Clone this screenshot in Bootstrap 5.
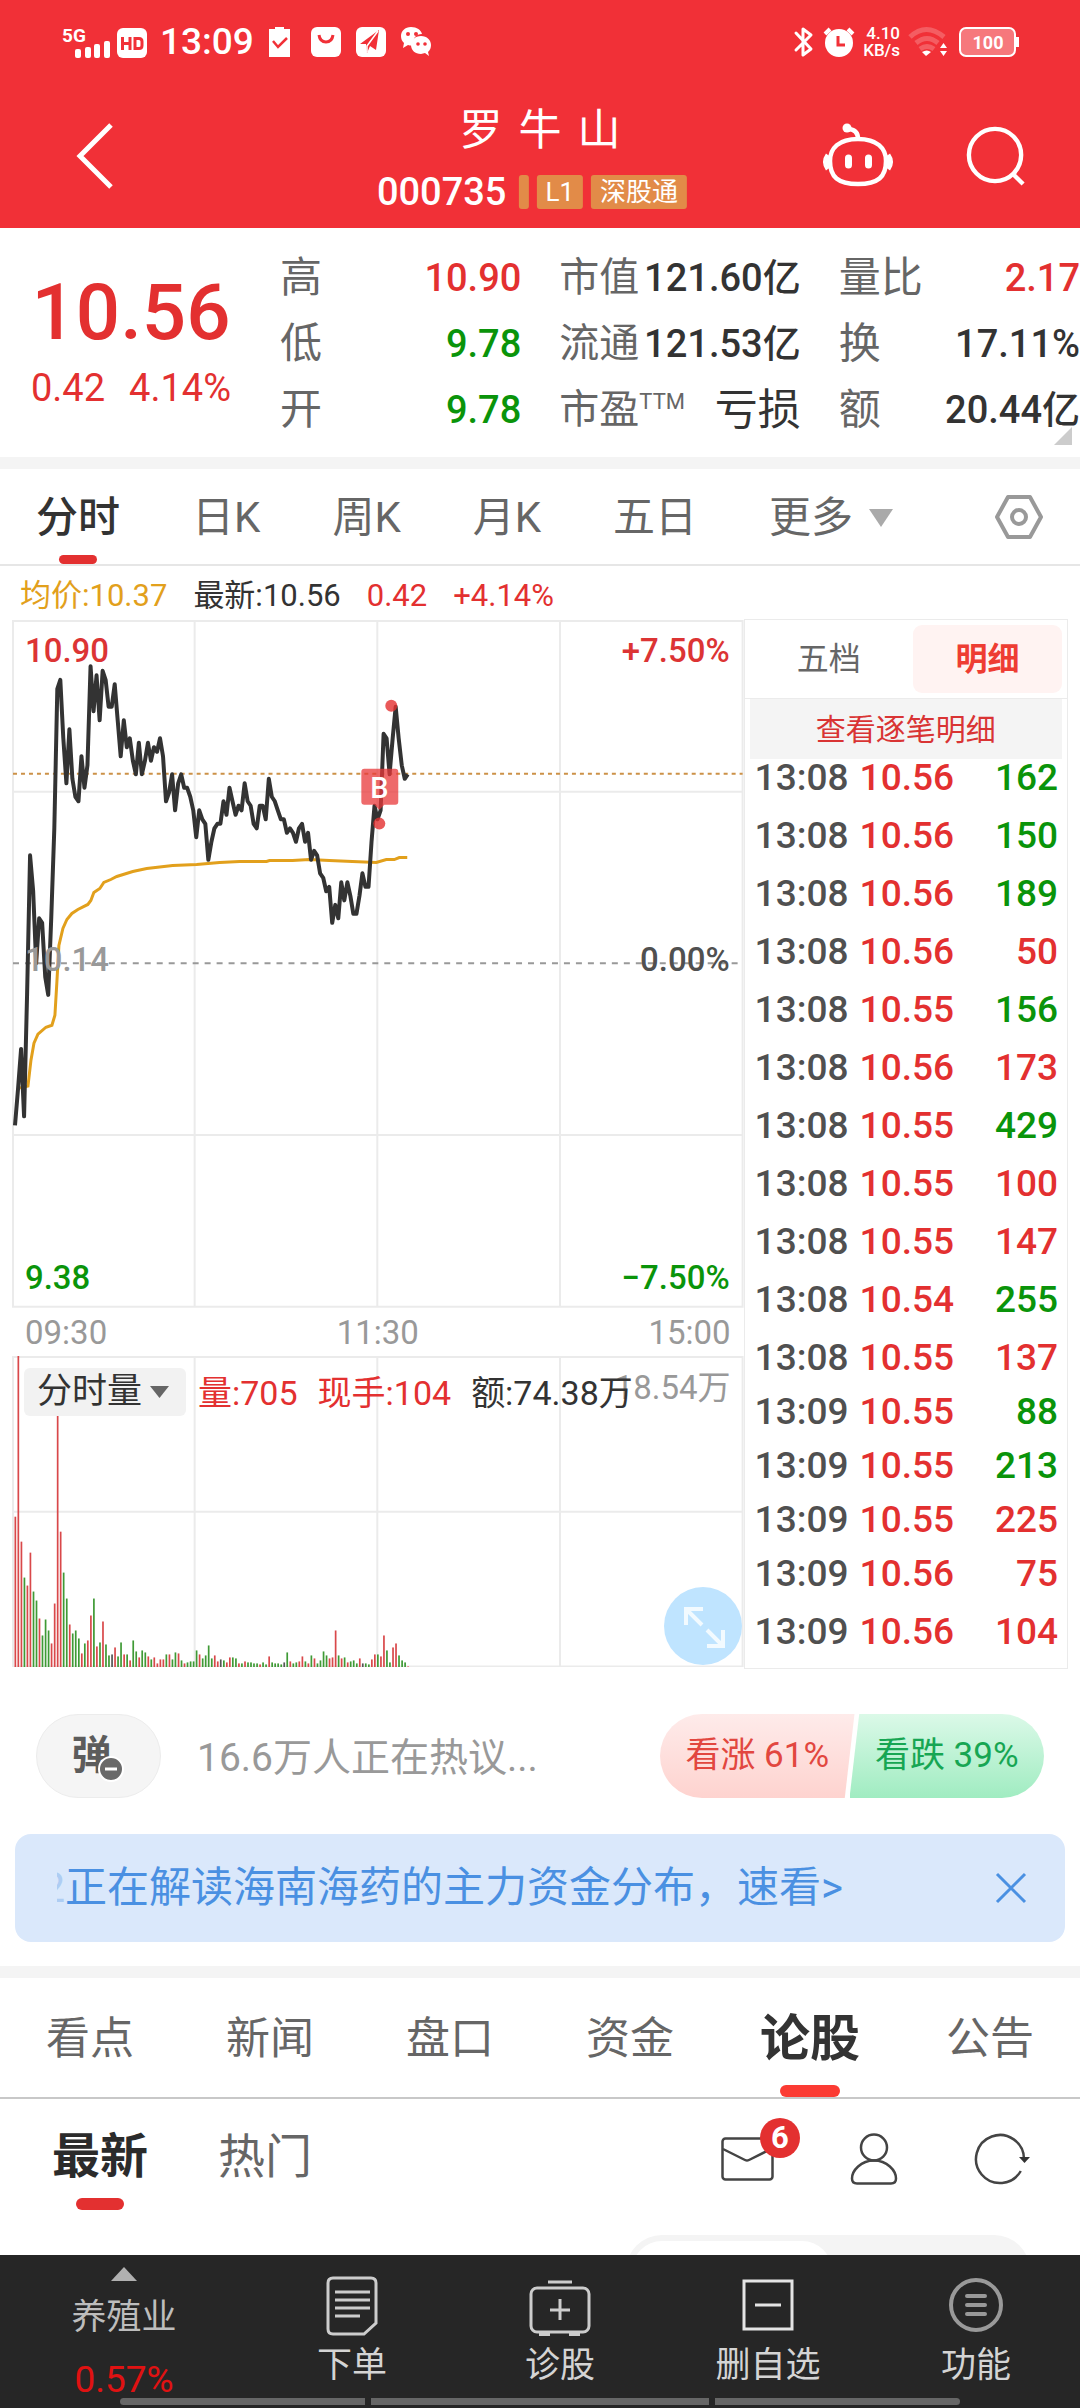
<!DOCTYPE html>
<html lang="zh-CN">
<head>
<meta charset="utf-8">
<meta name="viewport" content="width=device-width, initial-scale=1">
<title>罗牛山 000735</title>
<link rel="stylesheet" href="https://cdn.jsdelivr.net/npm/bootstrap@5.3.0/dist/css/bootstrap.min.css">
<style>
:root{--up:#e33030;--down:#0a940a;--ink:#333;--dim:#666;--faint:#999;--line:#ebebeb}
body{font-family:Roboto,"Noto Sans CJK SC",sans-serif;color:var(--ink);background:#fff}
a{text-decoration:none;color:inherit}
button{border:0;background:none;padding:0;color:inherit}
svg{display:block;flex:none}
.up{color:var(--up)}
.down{color:var(--down)}
.app-head{background:#f13037;color:#fff;height:228px}
.status-bar{height:84px;padding:0 60px 0 62px}
.clock{font-size:37px;line-height:40px;font-weight:500;margin:0 14px 0 12px}
.net-speed{font-size:17px;line-height:17px;font-weight:500;text-align:right;margin:0 8px 0 8px}
.title-bar{height:144px;padding:0 54px 0 76px}
.stock-name{font-size:43px;line-height:60px;gap:16px}
.code-row{padding:10px 16px 0 0}
.stock-code{font-size:38px;line-height:44px;font-weight:500}
.flag{background:#e28b48;font-size:26px;line-height:34px;height:34px;border-radius:3px;padding:0 9px}
.flag-cut{width:10px;padding:0}
.quote{height:229px}
.price-box{width:262px;padding-top:40px}
.price-now{font-size:78px;line-height:90px;font-weight:500}
.price-chg{font-size:38px;line-height:60px;gap:24px}
.facts{gap:38px;padding:17px 0 0 18px}
.facts dl{flex:1 1 0;margin:0;white-space:nowrap}
.facts dt{font-size:42px;line-height:66px;font-weight:400;color:var(--dim)}
.facts dd{font-size:38px;line-height:66px;font-weight:500;margin:0}
.facts .cjk{font-size:43px;font-weight:400}
.facts .wide dt{font-size:40px}
.facts sup{font-size:22px;top:-14px}
.facts-more{position:absolute;right:8px;bottom:12px}
.band{height:12px;background:#f4f4f4;flex:none}
.period{height:97px;padding:0 36px;gap:72px;border-bottom:2px solid #e6e6e6;font-size:42px;color:var(--dim)}
.period a,.sections a,.feed-tab{position:relative;white-space:nowrap}
.period a{line-height:93px;padding-top:2px}
.on{color:var(--ink);font-weight:500}
.on::after{content:"";position:absolute;left:50%;bottom:0;width:38px;height:9px;margin-left:-19px;border-radius:5px;background:var(--up)}
.legend-row{height:53px;padding:0 20px;gap:26px;font-size:31px;line-height:60px}
.desk{padding:0 12px}
.plots{flex:733 1 0;min-width:0;position:relative}
.plots svg.plot{width:100%;height:auto}
.plot text{font-size:33px;font-weight:500}
.axis{height:48px;padding:0 13px;font-size:33px;line-height:50px;color:var(--faint)}
.vol-head{position:absolute;left:12px;top:12px;font-size:34px;line-height:50px;gap:20px;white-space:nowrap}
.vol-pick{background:#f2f2f2;border-radius:6px;width:162px;height:48px;padding-left:13px;font-size:35px;line-height:46px;margin-right:-8px;color:#333}
.vol-max{position:absolute;right:13px;top:8px;font-size:33px;line-height:48px;color:var(--faint)}
.zoomer{position:absolute;right:2px;bottom:2px}
.tape{flex:323 1 0;min-width:0;border:1px solid var(--line);height:1050px}
.tape-tabs{height:79px;border-bottom:1px solid var(--line);padding:0 5px 0 0;font-size:32px}
.tape-tabs button{flex:1 1 0;height:68px;border-radius:9px;color:var(--dim)}
.tape-tabs button.picked{flex:0 0 149px;background:#fff3f2;color:#ee3d33;font-weight:700}
.tape-all{margin:0 5px;height:60px;line-height:62px;font-size:30px;background:#f4f4f4;color:#d93434;text-align:center}
.deals{width:100%;color:#505050;font-size:37px;font-weight:500;line-height:38px}
.deals td{padding:0 0 20px}
.deals tr.tight td{padding-bottom:16px}
.deals td:first-child{padding-left:10px;width:115px}
.deals td:last-child{text-align:right;padding-right:9px}
.talk{height:84px;margin:45px 36px 36px}
.danmu{width:125px;height:84px;border-radius:42px;background:#f5f5f5;border:1px solid #ececec;font-size:40px;font-weight:700;color:#5c5c5c;position:relative;line-height:72px}
.danmu span{display:block;padding-right:14px}
.danmu svg{position:absolute;left:61px;top:41px}
.talk input{border:0;outline:0;background:none;font-size:39px;flex:1 1 0;min-width:0;margin:4px 20px 0 36px;padding:0;color:var(--dim)}
.talk input::placeholder{color:var(--faint);opacity:1}
.vote{width:384px;height:84px;font-size:35px;line-height:80px;border-radius:42px;overflow:hidden}
.vote button{flex:1 1 0}
.vote .bull{background:linear-gradient(#feebea,#fed3cf);color:#e2473f;clip-path:polygon(0 0,100% 0,95% 100%,0 100%)}
.vote .bear{background:linear-gradient(#dbf9e8,#a0ecc1);color:#17a653;clip-path:polygon(5% 0,100% 0,100% 100%,0 100%);margin-left:-5px}
.promo{margin:0 15px 24px;height:108px;border-radius:16px;background:#dae8fb;color:#4a90e2;font-size:42px;line-height:110px;padding:0 38px 0 42px}
.ghost{display:inline-block;width:8px;overflow:hidden;direction:rtl;vertical-align:top;opacity:.3}
.sections{height:121px;border-bottom:2px solid #c8c8c8;font-size:44px;color:var(--dim)}
.sections a{flex:1 1 0;text-align:center;line-height:115px;padding-top:4px}
.sections a.on{font-size:50px;font-weight:700}
.sections a.on::after{width:60px;height:12px;margin-left:-30px;border-radius:6px;background:#fb3b33}
.feed{padding:0 50px 0 52px}
.feed-head{height:111px}
.feed-tab{font-size:47px;color:var(--dim);line-height:107px;padding-top:4px;margin-right:70px}
.feed-tab.on{font-size:48px;font-weight:700;color:#2b2b2b}
.feed-tab.on::after{width:48px;height:12px;margin-left:-24px;border-radius:6px}
.feed-tools{gap:76px}
.mail{position:relative}
.mail .dot{position:absolute;left:39px;top:-19px;width:40px;height:40px;border-radius:50%;background:var(--up);color:#fff;font-size:31px;line-height:40px;font-weight:700;text-align:center}
.sort-pill{width:404px;height:72px;border-radius:36px;background:#f4f4f4;padding:6px;margin:25px 0 0 auto}
.sort-pill span{display:block;width:200px;height:60px;border-radius:30px;background:#fff}
.tool-bar{height:153px;background:#262626;color:#d4d4d4;font-size:35px;position:relative;flex:none}
.tool-bar a{flex:208 1 0;padding-top:20px;line-height:50px}
.tool-bar .sector{flex:248 1 0;padding-top:12px}
.sector .name{line-height:74px;margin-bottom:-4px;color:#bdbdbd}
.sector .rate{line-height:58px;color:#e01212;font-size:37px}
.tool-bar .gesture{position:absolute;left:0;right:0;bottom:3px;padding:0 120px;gap:6px}
.gesture i{height:7px;background:#666;flex:245 1 0}
.gesture i:nth-child(2){flex-grow:338}
.gesture i:first-child{border-radius:4px 0 0 4px}
.gesture i:last-child{border-radius:0 4px 4px 0}
</style>
<script src="https://cdn.jsdelivr.net/npm/bootstrap@5.3.0/dist/js/bootstrap.bundle.min.js"></script>
</head>
<body class="d-flex flex-column vh-100 overflow-hidden">
<header class="app-head flex-shrink-0">
  <div class="status-bar d-flex align-items-center justify-content-between">
    <div class="d-flex align-items-center">
      <svg width="86" height="34" viewBox="0 0 86 34" fill="#fff"><text x="0" y="17" font-size="19" font-weight="700">5G</text><rect x="13" y="24" width="6" height="9" rx="2"/><rect x="23" y="22" width="6" height="11" rx="2"/><rect x="32" y="19" width="6" height="14" rx="2"/><rect x="42" y="16" width="6" height="17" rx="2"/><rect x="55" y="3" width="30" height="30" rx="6"/><path d="M60.500 12v13M68 12v13M60.500 18.500h7.500M73 13.500h4q3 0 3 3v4q0 3-3 3h-4z" fill="none" stroke="#f13037" stroke-width="3"/></svg>
      <span class="clock">13:09</span>
      <svg width="164" height="32" viewBox="0 0 164 32" fill="#fff"><path d="M1 3h6V1h9v2h6v28H1z"/><path d="M5 15l5 6 9-9" fill="none" stroke="#f13037" stroke-width="2.500"/><rect x="43" y="1" width="30" height="30" rx="6"/><path d="M51 9q1 7 7 7t7-7" fill="none" stroke="#f13037" stroke-width="3"/><rect x="88" y="1" width="30" height="30" rx="6"/><path d="M92 18L111 4l-3 20-6-4-3 7-1-9z" fill="#f13037"/><path d="M110 5L99 20v6" fill="none" stroke="#fff" stroke-width="1.500"/><path d="M143 1c-6 0-10 4-10 9 0 3 1 5 3 7l-1 5 5-3q4 1 6 0c-2-7 2-11 8-11-1-4-5-7-11-7z"/><path d="M153 10c-6 0-10 4-10 9s4 9 10 9l4-1 4 3-1-4c2-2 3-4 3-7 0-5-4-9-10-9z"/><g fill="#f13037"><circle cx="140" cy="8" r="2"/><circle cx="148" cy="8" r="2"/><circle cx="150" cy="18" r="1.800"/><circle cx="157" cy="18" r="1.800"/></g></svg>
    </div>
    <div class="d-flex align-items-center">
      <svg width="62" height="32" viewBox="0 0 62 32" fill="none" stroke="#fff"><path d="M3 7l15 16-8 6V3l8 6L3 24" stroke-width="3" stroke-linejoin="round" stroke-linecap="round"/><circle cx="46" cy="17" r="14" fill="#fff" stroke="none"/><path d="M32 8l5-5M60 8l-5-5" stroke-width="4"/><path d="M45 10v9h7" stroke="#f13037" stroke-width="3"/></svg>
      <span class="net-speed">4.10<br>KB/s</span>
      <svg width="112" height="32" viewBox="0 0 112 32"><g fill="none" stroke="#fff" stroke-opacity=".22" stroke-width="5"><path d="M2 11q16-15 34 0M8 17q11-9 22 0M12 23q7-5 14 0"/></g><path d="M14 26q5-3 9 0l-5 4zM32 22h7l-3.500-5zM32 25h7l-3.500 5z" fill="#fff"/><rect x="52" y="2" width="55" height="28" rx="6" fill="#fff" fill-opacity=".35" stroke="#fff" stroke-width="2"/><rect x="108" y="11" width="3" height="10" fill="#fff"/><text x="80" y="23" font-size="18" font-weight="700" fill="#fff" text-anchor="middle">100</text></svg>
    </div>
  </div>
  <div class="title-bar position-relative d-flex align-items-center">
    <button aria-label="返回"><svg width="38" height="66" viewBox="0 0 38 66" fill="none" stroke="#fff" stroke-width="5"><path d="M35 2L4 33l31 31"/></svg></button>
    <div class="flex-grow-1"></div>
    <button class="pb-1" aria-label="智能助手"><svg width="72" height="66" viewBox="0 0 72 66" fill="none" stroke="#fff" stroke-width="4.500"><path d="M36 18c19 0 28 9 28 22 0 16-8 23-28 23S8 56 8 40c0-13 9-22 28-22z"/><path d="M36 18q0-9-9-10" /><circle cx="25" cy="7" r="4.500" fill="#fff" stroke="none"/><path d="M6 34q-5 7 0 14M66 34q5 7 0 14" stroke-width="5"/><path d="M26.500 37v7M46.500 37v7" stroke-width="7" stroke-linecap="round"/></svg></button>
    <button class="ms-5" aria-label="搜索"><svg class="ms-4" width="60" height="60" viewBox="0 0 62 62" fill="none" stroke="#fff" stroke-width="4.500"><circle cx="30" cy="30" r="27"/><path d="M48 49l11 11"/></svg></button>
    <div class="position-absolute start-50 top-0 translate-middle-x d-flex flex-column align-items-center pt-3">
      <h1 class="stock-name d-flex fw-normal mb-0"><span>罗</span><span>牛</span><span>山</span></h1>
      <div class="code-row d-flex align-items-center gap-2"><span class="stock-code me-1">000735</span><span class="flag flag-cut"></span><span class="flag">L1</span><span class="flag text-nowrap">深股通</span></div>
    </div>
  </div>
</header>

<section class="quote d-flex position-relative flex-shrink-0">
  <div class="price-box text-center up">
    <div class="price-now">10.56</div>
    <div class="price-chg d-flex justify-content-center"><span>0.42</span><span>4.14%</span></div>
  </div>
  <div class="facts d-flex flex-grow-1">
    <dl>
      <div class="d-flex justify-content-between"><dt>高</dt><dd class="up">10.90</dd></div>
      <div class="d-flex justify-content-between"><dt>低</dt><dd class="down">9.78</dd></div>
      <div class="d-flex justify-content-between"><dt>开</dt><dd class="down">9.78</dd></div>
    </dl>
    <dl class="wide">
      <div class="d-flex justify-content-between"><dt>市值</dt><dd>121.60亿</dd></div>
      <div class="d-flex justify-content-between"><dt>流通</dt><dd>121.53亿</dd></div>
      <div class="d-flex justify-content-between"><dt>市盈<sup>TTM</sup></dt><dd class="cjk">亏损</dd></div>
    </dl>
    <dl>
      <div class="d-flex justify-content-between"><dt>量比</dt><dd class="up">2.17</dd></div>
      <div class="d-flex justify-content-between"><dt>换</dt><dd>17.11%</dd></div>
      <div class="d-flex justify-content-between"><dt>额</dt><dd>20.44亿</dd></div>
    </dl>
  </div>
  <svg class="facts-more" width="18" height="18"><path d="M18 0v18H0z" fill="#ccc"/></svg>
</section>
<div class="band"></div>

<nav class="period d-flex align-items-center flex-shrink-0">
  <a href="#" class="on">分时</a><a href="#">日K</a><a href="#">周K</a><a href="#">月K</a><a href="#">五日</a>
  <a href="#" class="d-flex align-items-center gap-3">更多<svg width="24" height="20"><path d="M0 1h24L12 19z" fill="#aaa"/></svg></a>
  <button class="ms-auto" aria-label="设置"><svg width="50" height="46" viewBox="0 0 50 46" fill="none" stroke="#999" stroke-width="4" stroke-linejoin="round"><path d="M14 3h22l11 20-11 20H14L3 23z"/><circle cx="25" cy="23" r="7"/></svg></button>
</nav>
<div class="legend-row d-flex flex-shrink-0"><span style="color:#e2a01c">均价:10.37</span><span>最新:10.56</span><span class="up">0.42</span><span class="up">+4.14%</span></div>

<section class="desk d-flex flex-shrink-0">
  <div class="plots">
    <svg class="plot" viewBox="12 619 733 690">
      <g stroke="#ebebeb" stroke-width="2" fill="none"><path d="M13 621H744V1308H13zM195 621V1308M378 621V1308M561 621V1308M13 792H744M13 1136H744"/></g>
      <path d="M13 774H744" stroke="#cc9147" stroke-width="2" stroke-dasharray="4 4"/>
      <path d="M13 964H744" stroke="#999" stroke-width="2" stroke-dasharray="6 6"/>
      <polyline fill="none" stroke="#e2a01c" stroke-width="3" points="19,1089 28,1087 31,1061 34,1044 38,1035 46,1028 52,1026 55,1016 57,982 59,946 63,929 67,920 72,914 78,910 88,905 91,901 94,893 100,889 104,883 111,880 117,877 133,872 147,869 173,866 197,865 220,863 240,862 267,862 270,861 293,861 310,860 330,861 353,862 377,863 387,860 395,860 400,858 408,858"/>
      <polyline id="priceLine" fill="none" stroke="#333" stroke-width="4" stroke-linejoin="round"/>
      <g fill="#e33030" fill-opacity=".8"><circle cx="392" cy="706" r="6"/><circle cx="380" cy="824" r="6"/></g>
      <path d="M365 769h31q3 0 3 3v30q0 3-3 3h-11l-5 5-5-5h-10q-3 0-3-3v-30q0-3 3-3z" fill="#e8383a" fill-opacity=".75"/>
      <text x="380" y="798" text-anchor="middle" fill="#fff" style="font-size:29px">B</text>
      <text x="25" y="662" fill="#dc3434">10.90</text><text x="731" y="662" text-anchor="end" fill="#dc3434">+7.50%</text>
      <text x="25" y="972" fill="#999">10.14</text><text x="731" y="972" text-anchor="end" fill="#505050">0.00%</text>
      <text x="25" y="1290" fill="#0a940a">9.38</text><text x="731" y="1290" text-anchor="end" fill="#0a940a">−7.50%</text>
    </svg>
    <div class="axis d-flex justify-content-between"><span>09:30</span><span>11:30</span><span>15:00</span></div>
    <div class="position-relative">
      <svg class="plot" viewBox="12 1357 733 312">
        <path d="M13 1358H744V1668H13zM195 1358V1668M378 1358V1668M561 1358V1668M13 1513H744" fill="none" stroke="#ebebeb" stroke-width="2"/>
        <g id="volBars"></g>
      </svg>
      <span class="vol-max">18.54万</span>
      <div class="vol-head d-flex"><button class="vol-pick d-flex align-items-center gap-2">分时量<svg width="20" height="14"><path d="M0 1h19L9.500 13z" fill="#666"/></svg></button><span class="up">量:705</span><span class="up">现手:104</span><span>额:74.38万</span></div>
      <button class="zoomer" aria-label="全屏"><svg width="78" height="78" viewBox="0 0 78 78" fill="none" stroke="#f2faff" stroke-width="4"><circle cx="39" cy="39" r="39" fill="#bfe4ff" stroke="none"/><path d="M22 38V22h17M22 22l16 16M59 43v16H43M59 59L43 43"/></svg></button>
    </div>
  </div>
  <div class="tape">
    <div class="tape-tabs d-flex align-items-center"><button>五档</button><button class="picked">明细</button></div>
    <a class="tape-all d-block" href="#">查看逐笔明细</a>
    <table class="deals"><tbody id="deals"></tbody></table>
  </div>
</section>

<section class="talk d-flex align-items-center flex-shrink-0">
  <button class="danmu" aria-label="弹幕"><span>弹</span><svg width="26" height="26"><circle cx="13" cy="13" r="12" fill="#6a6a6a" stroke="#fff" stroke-width="2"/><path d="M7 13h12" stroke="#fff" stroke-width="3"/></svg></button>
  <input type="text" aria-label="评论" placeholder="16.6万人正在热议...">
  <div class="vote d-flex"><button class="bull">看涨 61%</button><button class="bear">看跌 39%</button></div>
</section>
<section class="promo d-flex align-items-center justify-content-between flex-shrink-0">
  <a href="#" class="text-nowrap"><span class="ghost">2</span>正在解读海南海药的主力资金分布，速看&gt;</a>
  <button aria-label="关闭"><svg width="32" height="32" viewBox="0 0 32 32" stroke="#4a90e2" stroke-width="3"><path d="M2 2l28 28M30 2L2 30"/></svg></button>
</section>
<div class="band"></div>
<nav class="sections d-flex flex-shrink-0"><a href="#">看点</a><a href="#">新闻</a><a href="#">盘口</a><a href="#">资金</a><a href="#" class="on">论股</a><a href="#">公告</a></nav>

<section class="feed flex-grow-1 overflow-hidden">
  <div class="feed-head d-flex align-items-center">
    <a href="#" class="feed-tab on">最新</a><a href="#" class="feed-tab">热门</a>
    <div class="feed-tools d-flex align-items-center ms-auto pt-2">
      <button class="mail" aria-label="消息"><svg width="53" height="44" viewBox="0 0 53 44" fill="none" stroke="#444" stroke-width="2.500"><rect x="1.500" y="1.500" width="50" height="41" rx="3"/><path d="M2 12l22 11q2 1 4 0l22-11"/></svg><span class="dot">6</span></button>
      <button aria-label="我的"><svg width="48" height="52" viewBox="0 0 48 52" fill="none" stroke="#444" stroke-width="2.500"><circle cx="24" cy="14.500" r="13"/><path d="M24 27.500c13 0 22 10 22 18q0 5-5 5H7q-5 0-5-5c0-8 9-18 22-18z"/></svg></button>
      <button aria-label="刷新"><svg width="56" height="52" viewBox="0 0 56 52" fill="none" stroke="#444" stroke-width="2.500"><path d="M46.800 38A24 24 0 1 1 50 26"/><path d="M45 24h11l-5.500 6z" fill="#333" stroke="none"/></svg></button>
    </div>
  </div>
  <div class="sort-pill"><span></span></div>
</section>

<footer class="tool-bar d-flex text-center">
  <a href="#" class="sector d-flex flex-column align-items-center"><svg width="26" height="14"><path d="M13 0l13 14H0z" fill="#b0b0b0"/></svg><span class="name">养殖业</span><span class="rate">0.57%</span></a>
  <a href="#" class="d-flex flex-column align-items-center"><svg width="54" height="62" viewBox="0 0 54 62" fill="none" stroke="#ccc" stroke-width="3"><path d="M8 3h38q5 0 5 5v40L39 59H8q-5 0-5-5V8q0-5 5-5z"/><path d="M10 17h35M10 25h35M10 33h35M10 41h25"/></svg><span class="pt-1">下单</span></a>
  <a href="#" class="d-flex flex-column align-items-center"><svg width="62" height="62" viewBox="0 0 62 62" fill="none" stroke="#ccc" stroke-width="3"><rect x="2" y="13" width="58" height="44" rx="6"/><path d="M19 7h24M31 24v21M21 35h20"/><path d="M10 59h11M40 59h11" stroke-width="4"/></svg><span class="pt-1">诊股</span></a>
  <a href="#" class="d-flex flex-column align-items-center"><svg width="52" height="62" viewBox="0 0 52 62" fill="none" stroke="#e4e4e4" stroke-width="3"><rect x="2" y="6" width="48" height="48"/><path d="M13 30h26"/></svg><span class="pt-1">删自选</span></a>
  <a href="#" class="d-flex flex-column align-items-center"><svg width="54" height="62" viewBox="0 0 54 62" fill="none" stroke="#999" stroke-width="4"><circle cx="27" cy="30" r="25"/><path d="M18 21h18M18 30h18M18 39h18" stroke-linecap="round"/></svg><span class="pt-1">功能</span></a>
  <div class="gesture d-flex"><i></i><i></i><i></i></div>
</footer>

<script>
// Price per minute, in cents above or below the 10.14 close
const cents = [-36,-28,-19,-34,-7,24,16,0,10,9,-3,-7,10,30,61,63,50,40,52,41,37,36,46,39,44,66,56,64,54,65,63,57,57,62,54,46,54,48,50,45,42,49,42,45,49,45,48,47,50,46,36,38,42,34,40,42,39,39,37,34,28,34,32,31,23,27,30,31,31,36,33,39,36,33,35,34,40,36,35,31,30,35,35,32,41,37,36,34,32,32,29,30,29,27,30,31,27,29,23,25,24,20,19,16,17,9,13,10,18,14,18,15,11,11,15,20,17,17,27,35,32,34,51,50,42,50,57,50,44,41,42];
document.getElementById('priceLine').setAttribute('points', cents.map((c, i) => (15 + i * 3.027).toFixed(1) + ',' + (964 - c * 4.51).toFixed(1)).join(' '));
// Volume per minute: height and direction (r up, g down, k flat)
const vols = '151r 312r 126r 90g 82r 115r 76g 67g 49r 32g 48g 37g 24r 64r 259r 136r 95g 69g 43r 34g 37g 29g 14r 24g 27r 52r 69g 21r 25g 46r 23g 12g 13k 20r 11g 25g 13r 13g 7r 27g 16g 10r 17g 15g 11r 8g 10r 4r 8r 8r 13g 13r 8g 15g 14r 7g 4r 5g 6g 6g 17g 13r 9g 12g 22g 9g 12r 6r 8k 7g 5r 10r 10g 9g 4r 4g 6r 5g 5g 4g 4g 3r 5g 3g 11r 5g 4g 4g 3g 5k 15g 6r 4g 5g 6r 11r 6g 4r 12g 9r 4g 7g 16g 12g 9r 10r 37r 12g 9r 10g 5r 6g 7g 4g 9r 4k 4g 3g 8r 13r 13g 11r 32r 17g 5g 20r 24r 12g 7g 5g 1r'.split(' ');
const tone = {r: '#d9484a', g: '#3f9a35', k: '#555'};
document.getElementById('volBars').innerHTML = vols.map((v, i) => {
  const h = parseInt(v, 10);
  return `<rect x="${(14.5 + i * 3.027).toFixed(1)}" y="${1669 - h}" width="1.7" height="${h}" fill="${tone[v.slice(-1)]}"/>`;
}).join('');
// Latest trades
const deals = [['13:08','10.56',162,'down'],['13:08','10.56',150,'down'],['13:08','10.56',189,'down'],['13:08','10.56',50,'up'],['13:08','10.55',156,'down'],['13:08','10.56',173,'up'],['13:08','10.55',429,'down'],['13:08','10.55',100,'up'],['13:08','10.55',147,'up'],['13:08','10.54',255,'down'],['13:08','10.55',137,'up'],['13:09','10.55',88,'down'],['13:09','10.55',213,'down'],['13:09','10.55',225,'up'],['13:09','10.56',75,'up'],['13:09','10.56',104,'up']];
document.getElementById('deals').innerHTML = deals.map(([t, p, n, d], i) => `<tr class="${i > 9 && i < 14 ? 'tight' : ''}"><td>${t}</td><td class="up">${p}</td><td class="${d}">${n}</td></tr>`).join('');
</script>
</body>
</html>
